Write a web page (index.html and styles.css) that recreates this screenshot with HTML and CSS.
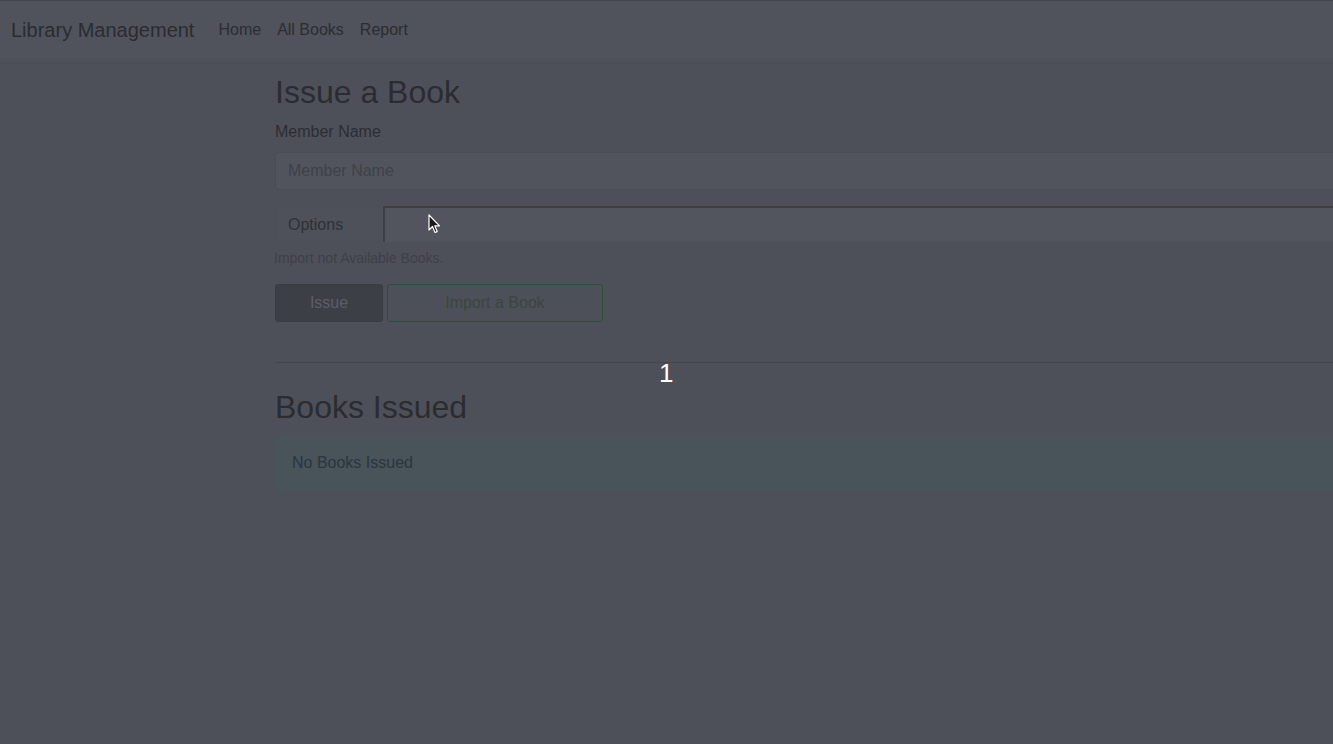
FILE: index.html
```html
<!DOCTYPE html>
<html>
<head>
<meta charset="utf-8">
<title>Library Management</title>
<link rel="stylesheet" href="styles.css">
</head>
<body>
<nav class="navbar">
  <span class="brand">Library Management</span>
  <a class="nav-link">Home</a>
  <a class="nav-link">All Books</a>
  <a class="nav-link">Report</a>
</nav>
<main class="main">
  <h1 class="title">Issue a Book</h1>
  <label class="label">Member Name</label>
  <div class="input">Member Name</div>
  <div class="input-group">
    <div class="prepend">Options</div>
    <div class="select"></div>
  </div>
  <small class="help">Import not Available Books.</small>
  <div class="buttons">
    <button class="btn btn-issue">Issue</button>
    <button class="btn btn-import">Import a Book</button>
  </div>
  <hr class="rule">
  <h2 class="title title-2">Books Issued</h2>
  <div class="alert">No Books Issued</div>
</main>
<div class="counter">1</div>
<svg class="cursor" width="13" height="20" viewBox="0 0 13 20">
  <path d="M1 1 L1 16 L4.5 12.5 L7 18.5 L9.2 17.6 L6.8 11.8 L11.5 11.8 Z" fill="#1a1b1e" stroke="#ffffff" stroke-width="1.2" stroke-linejoin="round"/>
</svg>
</body>
</html>
```

FILE: styles.css
```css
html, body {
  margin: 0;
  padding: 0;
}
body {
  background: #4e5059;
  font-family: "Liberation Sans", Arial, sans-serif;
  color: #2b2d33;
  width: 1333px;
  height: 744px;
  overflow: hidden;
  position: relative;
}
.navbar {
  background: #50535b;
  border-top: 1px solid #43464d;
  display: flex;
  align-items: center;
  padding-left: 11px;
  box-sizing: border-box;
  height: 58px;
}
.brand {
  font-size: 20px;
  color: #2a2c31;
  margin-right: 24px;
  line-height: 30px;
}
.nav-link {
  font-size: 16px;
  color: #2b2d33;
  margin-right: 16px;
  line-height: 24px;
}
.main {
  margin-left: 275px;
  width: 1100px;
  padding-top: 15px;
}
.title {
  font-size: 32px;
  font-weight: 400;
  line-height: 38px;
  margin: 0 0 9px 0;
  color: #2a2c31;
}
.label {
  display: block;
  font-size: 16px;
  line-height: 24px;
  margin-bottom: 8px;
  color: #2b2d33;
}
.input {
  height: 38px;
  box-sizing: border-box;
  border: 1px solid #494c54;
  border-radius: 4px;
  background: #51545d;
  color: #3e4148;
  font-size: 16px;
  line-height: 36px;
  padding-left: 12px;
  margin-bottom: 16px;
}
.input-group {
  display: flex;
  height: 36px;
}
.prepend {
  width: 108px;
  box-sizing: border-box;
  border: 1px solid #4b4e56;
  border-right: none;
  background: #4e5159;
  padding-left: 12px;
  font-size: 16px;
  line-height: 36px;
  color: #2e3036;
}
.select {
  flex: 1;
  border-top: 2px solid #3d3f45;
  border-left: 2px solid #3d3f45;
  background: #52555e;
}
.help {
  display: block;
  font-size: 14px;
  line-height: 20px;
  margin: 6px 0 0 -1px;
  color: #3d4047;
}
.buttons {
  display: flex;
  gap: 4px;
  margin-top: 16px;
}
.btn {
  height: 38px;
  font-family: inherit;
  font-size: 16px;
  border-radius: 3px;
  box-sizing: border-box;
  padding: 0;
}
.btn-issue {
  width: 108px;
  background: #3d3f46;
  border: 1px solid #3a3c43;
  color: #5b5e66;
}
.btn-import {
  width: 216px;
  background: transparent;
  border: 1px solid #2c4f3c;
  color: #3a4641;
}
.rule {
  border: none;
  border-top: 1px solid #42454c;
  margin: 40px 0 0 0;
  height: 0;
}
.title-2 {
  margin-top: 25px;
  margin-bottom: 10px;
}
.alert {
  height: 55px;
  box-sizing: border-box;
  background: #48535a;
  padding: 0 16px 0 17px;
  line-height: 54px;
  font-size: 16px;
  color: #2a3640;
}
.counter {
  position: absolute;
  left: 659px;
  top: 358px;
  font-size: 26px;
  line-height: 30px;
  color: #ffffff;
}
.cursor {
  position: absolute;
  left: 428px;
  top: 214px;
}
```
